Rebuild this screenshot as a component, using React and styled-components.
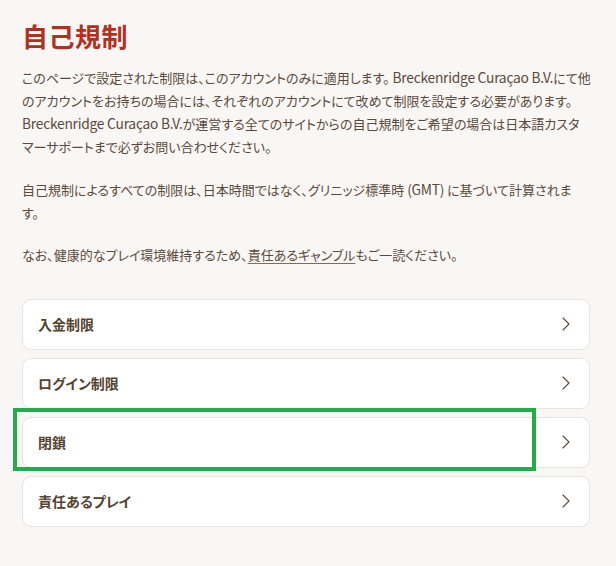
import React from "react"
import styled, { createGlobalStyle } from "styled-components"
import { ChevronRight } from "lucide-react"

const GlobalStyle = createGlobalStyle`
  html, body {
    margin: 0;
    padding: 0;
    background: #f9f7f5;
  }
  body {
    font-family: "Noto Sans CJK JP", sans-serif;
  }
`

const Page = styled.div`
  position: relative;
  width: 616px;
  min-height: 566px;
  box-sizing: border-box;
  padding: 19px 26px 0 22px;
  background: #f9f7f5;
`

const Title = styled.h1`
  margin: 0 0 13px;
  font-family: "Noto Sans CJK JP", sans-serif;
  font-size: 26px;
  line-height: 34px;
  font-weight: 700;
  color: #b3301e;
  letter-spacing: 0.5px;
`

const Text = styled.p`
  margin: 0 0 20px;
  font-family: "Noto Sans CJK JP", sans-serif;
  font-size: 13px;
  line-height: 22.5px;
  color: #5b4a3b;
  font-feature-settings: "palt";
  white-space: nowrap;
`

const Latin = styled.span`
  font-size: 13.8px;
  letter-spacing: -0.25px;
`

const Link = styled.a`
  color: #5b4a3b;
  text-decoration: underline;
  text-decoration-color: #8a6a50;
  text-underline-offset: 3px;
`

const List = styled.div`
  display: flex;
  flex-direction: column;
  gap: 8px;
  margin-top: 32px;
`

const Item = styled.div`
  display: flex;
  align-items: center;
  justify-content: space-between;
  height: 51px;
  box-sizing: border-box;
  padding: 0 11px 0 15px;
  background: #ffffff;
  border: 1px solid #e8e4e0;
  border-radius: 9px;
`

const Label = styled.span`
  font-family: "Noto Sans CJK JP", sans-serif;
  font-size: 14px;
  font-weight: 700;
  color: #54442f;
  font-feature-settings: "palt";
`

const Highlight = styled.div`
  position: absolute;
  left: 13px;
  top: 408px;
  width: 523px;
  height: 63px;
  box-sizing: border-box;
  border: 4px solid #22ad4a;
  pointer-events: none;
`

const items = ["入金制限", "ログイン制限", "閉鎖", "責任あるプレイ"]

const App = () => (
  <Page>
    <GlobalStyle />
    <Title>自己規制</Title>
    <Text>
      このページで設定された制限は、このアカウントのみに適用します。<Latin> Breckenridge Curaçao B.V.</Latin>にて他<br />
      のアカウントをお持ちの場合には、それぞれのアカウントにて改めて制限を設定する必要があります。<br />
      <Latin>Breckenridge Curaçao B.V.</Latin>が運営する全てのサイトからの自己規制をご希望の場合は日本語カスタ<br />
      マーサポートまで必ずお問い合わせください。
    </Text>
    <Text>
      自己規制によるすべての制限は、日本時間ではなく、グリニッジ標準時<Latin> (GMT) </Latin>に基づいて計算されま<br />
      す。
    </Text>
    <Text>
      なお、健康的なプレイ環境維持するため、<Link>責任あるギャンブル</Link>もご一読ください。
    </Text>
    <List>
      {items.map((label) => (
        <Item key={label}>
          <Label>{label}</Label>
          <ChevronRight size={24} strokeWidth={1.1} color="#5b4a3b" />
        </Item>
      ))}
    </List>
    <Highlight />
  </Page>
)

export default App
